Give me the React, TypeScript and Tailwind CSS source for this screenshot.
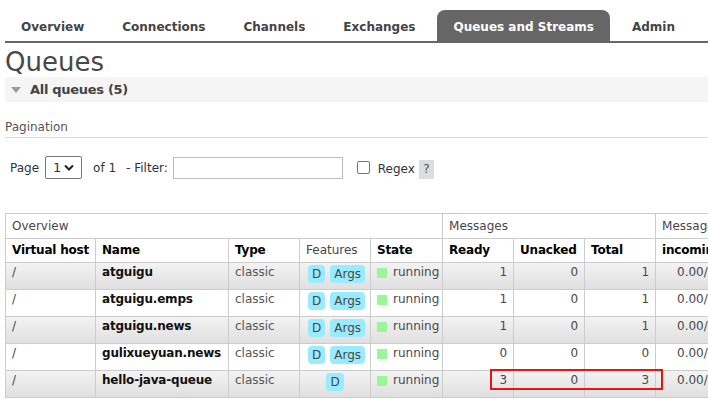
const TABS = ['Overview', 'Connections', 'Channels', 'Exchanges', 'Queues and Streams', 'Admin'];

type Queue = { name: string; args: boolean; ready: number; unacked: number; total: number };

const QUEUES: Queue[] = [
  { name: 'atguigu', args: true, ready: 1, unacked: 0, total: 1 },
  { name: 'atguigu.emps', args: true, ready: 1, unacked: 0, total: 1 },
  { name: 'atguigu.news', args: true, ready: 1, unacked: 0, total: 1 },
  { name: 'gulixueyuan.news', args: true, ready: 0, unacked: 0, total: 0 },
  { name: 'hello-java-queue', args: false, ready: 3, unacked: 0, total: 3 },
];

function Badge({ children }: { children: string }) {
  return (
    <span className="inline-block rounded-[4px] bg-[#99ebff] px-[4px] leading-[18px] text-[#484848]">{children}</span>
  );
}

export default function App() {
  const td = 'border border-[#cccccc] px-[6px] pt-[2px] align-top h-[27px] whitespace-nowrap';
  const th = 'border border-[#cccccc] px-[6px] text-left font-bold text-black h-[24px] whitespace-nowrap tracking-[-0.2px]';

  return (
    <div className="w-[708px] h-[406px] overflow-hidden bg-white text-[#484848]" style={{ fontFamily: '"DejaVu Sans", Verdana, sans-serif' }}>
      {/* Nav */}
      <div className="mt-[10px] ml-[5px] flex gap-[6px] border-b-2 border-[#666666]">
        {TABS.map((t) => (
          <div
            key={t}
            className={
              t === 'Queues and Streams'
                ? 'h-[31px] whitespace-nowrap rounded-t-[8px] bg-[#666666] px-4 pt-[8px] text-[12px] font-bold text-white'
                : 'h-[31px] whitespace-nowrap px-4 pt-[8px] text-[12px] font-bold text-[#444444]'
            }
          >
            {t}
          </div>
        ))}
      </div>

      <div className="pl-[5px]">
        <h1 className="mt-[4px] text-[26px] leading-[30px] text-[#484848]">Queues</h1>

        {/* All queues */}
        <div className="flex h-[25px] items-center gap-[9px] bg-[#f5f5f5] pl-[6px]">
          <svg width="10" height="6" viewBox="0 0 10 6">
            <path d="M0 0 L10 0 L5 6 Z" fill="#999999" />
          </svg>
          <span className="text-[13px] font-bold tracking-[-0.3px] text-[#444444]">All queues (5)</span>
        </div>

        {/* Pagination */}
        <div className="mt-[17px] border-b border-[#dddddd] pb-[2px] text-[12px] leading-[16px] text-[#555555]">Pagination</div>

        <div className="mt-[18px] flex items-center pl-[5px] text-[12px] text-[#333333]">
          <span>Page</span>
          <div className="ml-[6px] flex h-[23px] w-[37px] items-center justify-between rounded-[2px] border border-[#767676] px-[7px]">
            <span className="text-[13px]">1</span>
            <svg width="10" height="7" viewBox="0 0 10 7">
              <path d="M1 1.5 L5 5.5 L9 1.5" fill="none" stroke="#222222" strokeWidth="2" />
            </svg>
          </div>
          <span className="ml-[11px]">of 1</span>
          <span className="ml-[10px]">- Filter:</span>
          <div className="ml-[5px] h-[22px] w-[170px] border border-[#bbbbbb]" />
          <div className="ml-[14px] h-[13px] w-[13px] rounded-[2px] border border-[#767676]" />
          <span className="ml-[8px] mt-[3px]">Regex</span>
          <span className="ml-[4px] mt-[3px] flex h-[19px] w-[15px] items-center justify-center bg-[#dddddd] text-[#555555]">?</span>
        </div>

        {/* Table */}
        <table className="mt-[34px] border-collapse text-[12px] leading-[15px]" style={{ tableLayout: 'fixed', width: 800 }}>
          <colgroup>
            <col className="w-[90px]" />
            <col className="w-[133px]" />
            <col className="w-[71px]" />
            <col className="w-[71px]" />
            <col className="w-[72px]" />
            <col className="w-[71px]" />
            <col className="w-[71px]" />
            <col className="w-[71px]" />
            <col className="w-[75px]" />
            <col className="w-[75px]" />
          </colgroup>
          <thead>
            <tr>
              <th colSpan={5} className="h-[25px] border border-[#cccccc] px-[6px] text-left font-normal text-[#484848]">Overview</th>
              <th colSpan={3} className="h-[25px] border border-[#cccccc] px-[6px] text-left font-normal text-[#484848]">Messages</th>
              <th colSpan={2} className="h-[25px] whitespace-nowrap border border-[#cccccc] px-[6px] text-left font-normal text-[#484848]">Message rates</th>
            </tr>
            <tr>
              <th className={th}>Virtual host</th>
              <th className={th}>Name</th>
              <th className={th}>Type</th>
              <th className="h-[24px] border border-[#cccccc] px-[6px] text-left font-normal text-[#484848]">Features</th>
              <th className={th}>State</th>
              <th className={th}>Ready</th>
              <th className={th}>Unacked</th>
              <th className={th}>Total</th>
              <th className={th}>incoming</th>
              <th className={th}>deliver / get</th>
            </tr>
          </thead>
          <tbody>
            {QUEUES.map((q, i) => (
              <tr key={q.name} className={i % 2 === 0 ? 'bg-gradient-to-b from-[#f3f3f3] to-[#dfdfdf]' : 'bg-white'}>
                <td className={td}>/</td>
                <td className={td + ' font-bold tracking-[-0.2px] text-[#111111]'}>{q.name}</td>
                <td className={td + ' text-[#555555]'}>classic</td>
                <td className={td}>
                  {q.args ? (
                    <div className="flex gap-[5px] pl-[2px]">
                      <Badge>D</Badge>
                      <Badge>Args</Badge>
                    </div>
                  ) : (
                    <div className="flex justify-center">
                      <Badge>D</Badge>
                    </div>
                  )}
                </td>
                <td className={td}>
                  <div className="flex items-center gap-[6px]">
                    <span className="inline-block h-[10px] w-[10px] shrink-0 bg-[#98f898]" />
                    <span>running</span>
                  </div>
                </td>
                <td className={td + ' relative text-right'}>
                  {q.ready}
                  {i === 4 && (
                    <div className="pointer-events-none absolute left-[47px] top-[-2px] h-[21px] w-[173px] border-2 border-[#ee1111]" />
                  )}
                </td>
                <td className={td + ' text-right'}>{q.unacked}</td>
                <td className={td + ' text-right'}>{q.total}</td>
                <td className={td + ' text-right'}>
                  <span className="mr-[10px]">0.00/s</span>
                </td>
                <td className={td + ' text-right'}>0.00/s</td>
              </tr>
            ))}
          </tbody>
        </table>
      </div>
    </div>
  );
}
